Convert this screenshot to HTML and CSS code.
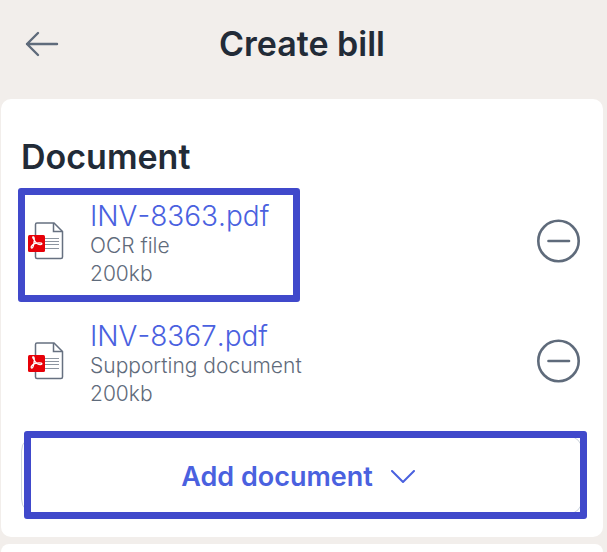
FILE: index.html
```
<!DOCTYPE html>
<html lang="en">
<head>
<meta charset="utf-8">
<meta name="viewport" content="width=device-width, initial-scale=1">
<title>Create bill</title>
<link rel="stylesheet" href="styles.css">
</head>
<body>
<svg class="sprite" aria-hidden="true">
  <symbol id="pdf" viewBox="0 0 36 38">
    <path d="M9 1h17l8.500 8.500v25.500a1.500 1.500 0 0 1-1.500 1.500h-24a1.500 1.500 0 0 1-1.500-1.500v-32.500a1.500 1.500 0 0 1 1.500-1.500z" fill="#fff" stroke="#667080" stroke-width="1.500"/>
    <path d="M25.500 1v8.500h9" fill="none" stroke="#667080" stroke-width="1.500"/>
    <path d="M17 16.500h14M17 19.500h14M17 22.500h14M17 26.500h14" stroke="#8d95a0" stroke-width="1"/>
    <rect x="0" y="13" width="17" height="17" rx="1.500" fill="#e60008"/>
    <path d="M5.800 17.200c-1.500-1.700-1.300-2.600-.3-2.300 1.200.4.900 2.800.6 5-.3 2.400-1 6.200-2.200 6.200-1.500 0-.4-3.200 2.200-4.300 2.500-1 7.600-1.500 7.800-.2.200 1.200-2.500 1.300-4.600.1-1.900-1.100-2.900-2.700-3.500-4.500z" fill="none" stroke="#fff" stroke-width="1.300" stroke-linejoin="round"/>
  </symbol>
  <symbol id="minus" viewBox="0 0 44 44">
    <circle cx="21.500" cy="22" r="20.200" fill="none" stroke="#5f6b7b" stroke-width="2.600"/>
    <path d="M11.500 22h20.500" stroke="#5f6b7b" stroke-width="2.600" stroke-linecap="round"/>
  </symbol>
</svg>

<header class="topbar">
  <button class="icon-button back" type="button" aria-label="Back">
    <svg width="34" height="26" viewBox="0 0 34 26" fill="none" stroke="#5f6b7b" stroke-width="2.400" stroke-linecap="round" stroke-linejoin="round"><path d="M32 13H2M13 2L2 13l11 11"/></svg>
  </button>
  <h1>Create bill</h1>
</header>

<main class="cards">
  <section class="card">
    <h2>Document</h2>
    <ul class="files">
      <li class="file highlighted">
        <svg class="file-icon"><use href="#pdf"/></svg>
        <div class="file-text">
          <a href="#">INV-8363.pdf</a>
          <p>OCR file</p>
          <p>200kb</p>
        </div>
        <button class="icon-button" type="button" aria-label="Remove INV-8363.pdf"><svg width="44" height="44"><use href="#minus"/></svg></button>
      </li>
      <li class="file">
        <svg class="file-icon"><use href="#pdf"/></svg>
        <div class="file-text">
          <a href="#">INV-8367.pdf</a>
          <p>Supporting document</p>
          <p>200kb</p>
        </div>
        <button class="icon-button" type="button" aria-label="Remove INV-8367.pdf"><svg width="44" height="44"><use href="#minus"/></svg></button>
      </li>
    </ul>
    <button class="add" type="button">
      <span>Add document</span>
      <svg width="24" height="14" viewBox="0 0 24 14" fill="none" stroke="#4a61df" stroke-width="2" stroke-linecap="round" stroke-linejoin="round"><path d="M1 1l11 11L23 1"/></svg>
    </button>
  </section>
  <section class="card next"></section>
</main>
</body>
</html>
```
FILE: styles.css
```
*,
*::after {
  box-sizing: border-box;
}

body {
  display: flex;
  flex-direction: column;
  min-height: 100vh;
  margin: 0;
  background: #f2eeeb;
  color: #222b37;
  font-family: Inter, "Liberation Sans", sans-serif;
}

h1,
h2,
p,
ul {
  margin: 0;
  padding: 0;
}

h1,
h2 {
  font-size: 34px;
  line-height: 40px;
  font-weight: 600;
}

.sprite {
  position: absolute;
  width: 0;
  height: 0;
}

.icon-button {
  display: flex;
  padding: 0;
  border: 0;
  background: none;
  cursor: pointer;
}

.topbar {
  display: grid;
  grid-template-columns: 34px 1fr 34px;
  align-items: center;
  padding: 24px 28px 35px 25px;
}

.topbar h1 {
  text-align: center;
}

.cards {
  display: flex;
  flex: 1;
  flex-direction: column;
  gap: 7px;
  padding: 0 4px 0 1px;
}

.card {
  padding: 38px 20px 22px;
  border-radius: 10px;
  background: #fff;
}

.card.next {
  flex: 1;
  padding: 0;
  border-radius: 10px 10px 0 0;
}

.files {
  display: flex;
  flex-direction: column;
  gap: 32px;
  padding-top: 23px;
  list-style: none;
}

.file {
  position: relative;
  display: grid;
  grid-template-columns: 36px 1fr 44px;
  column-gap: 26px;
  align-items: start;
  padding: 0 2px 0 7px;
}

.file-icon {
  width: 36px;
  height: 38px;
  margin-top: 22px;
}

.file .icon-button {
  margin-top: 19px;
}

.file-text {
  color: #5f6b7b;
  font-size: 21px;
  font-weight: 300;
  line-height: 28px;
}

.file-text a {
  display: block;
  color: #4a61df;
  font-size: 28px;
  font-kerning: none;
  line-height: 32px;
  text-decoration: none;
}

.highlighted::after,
.add::after {
  content: "";
  position: absolute;
  border: 7px solid #4049cb;
  border-radius: 3px;
  pointer-events: none;
}

.highlighted::after {
  top: -12px;
  bottom: -14px;
  left: -3px;
  width: 282px;
}

.add {
  position: relative;
  display: flex;
  align-items: center;
  justify-content: center;
  gap: 18px;
  width: 100%;
  height: 80px;
  margin-top: 27px;
  padding: 3px 8px 0 0;
  border: 1px solid #ccd3dd;
  border-radius: 16px;
  background: #fff;
  color: #4a61df;
  font: 600 27px/34px Inter, "Liberation Sans", sans-serif;
  cursor: pointer;
}

.add::after {
  top: -5px;
  right: -5px;
  bottom: -5px;
  left: 2px;
}
```
